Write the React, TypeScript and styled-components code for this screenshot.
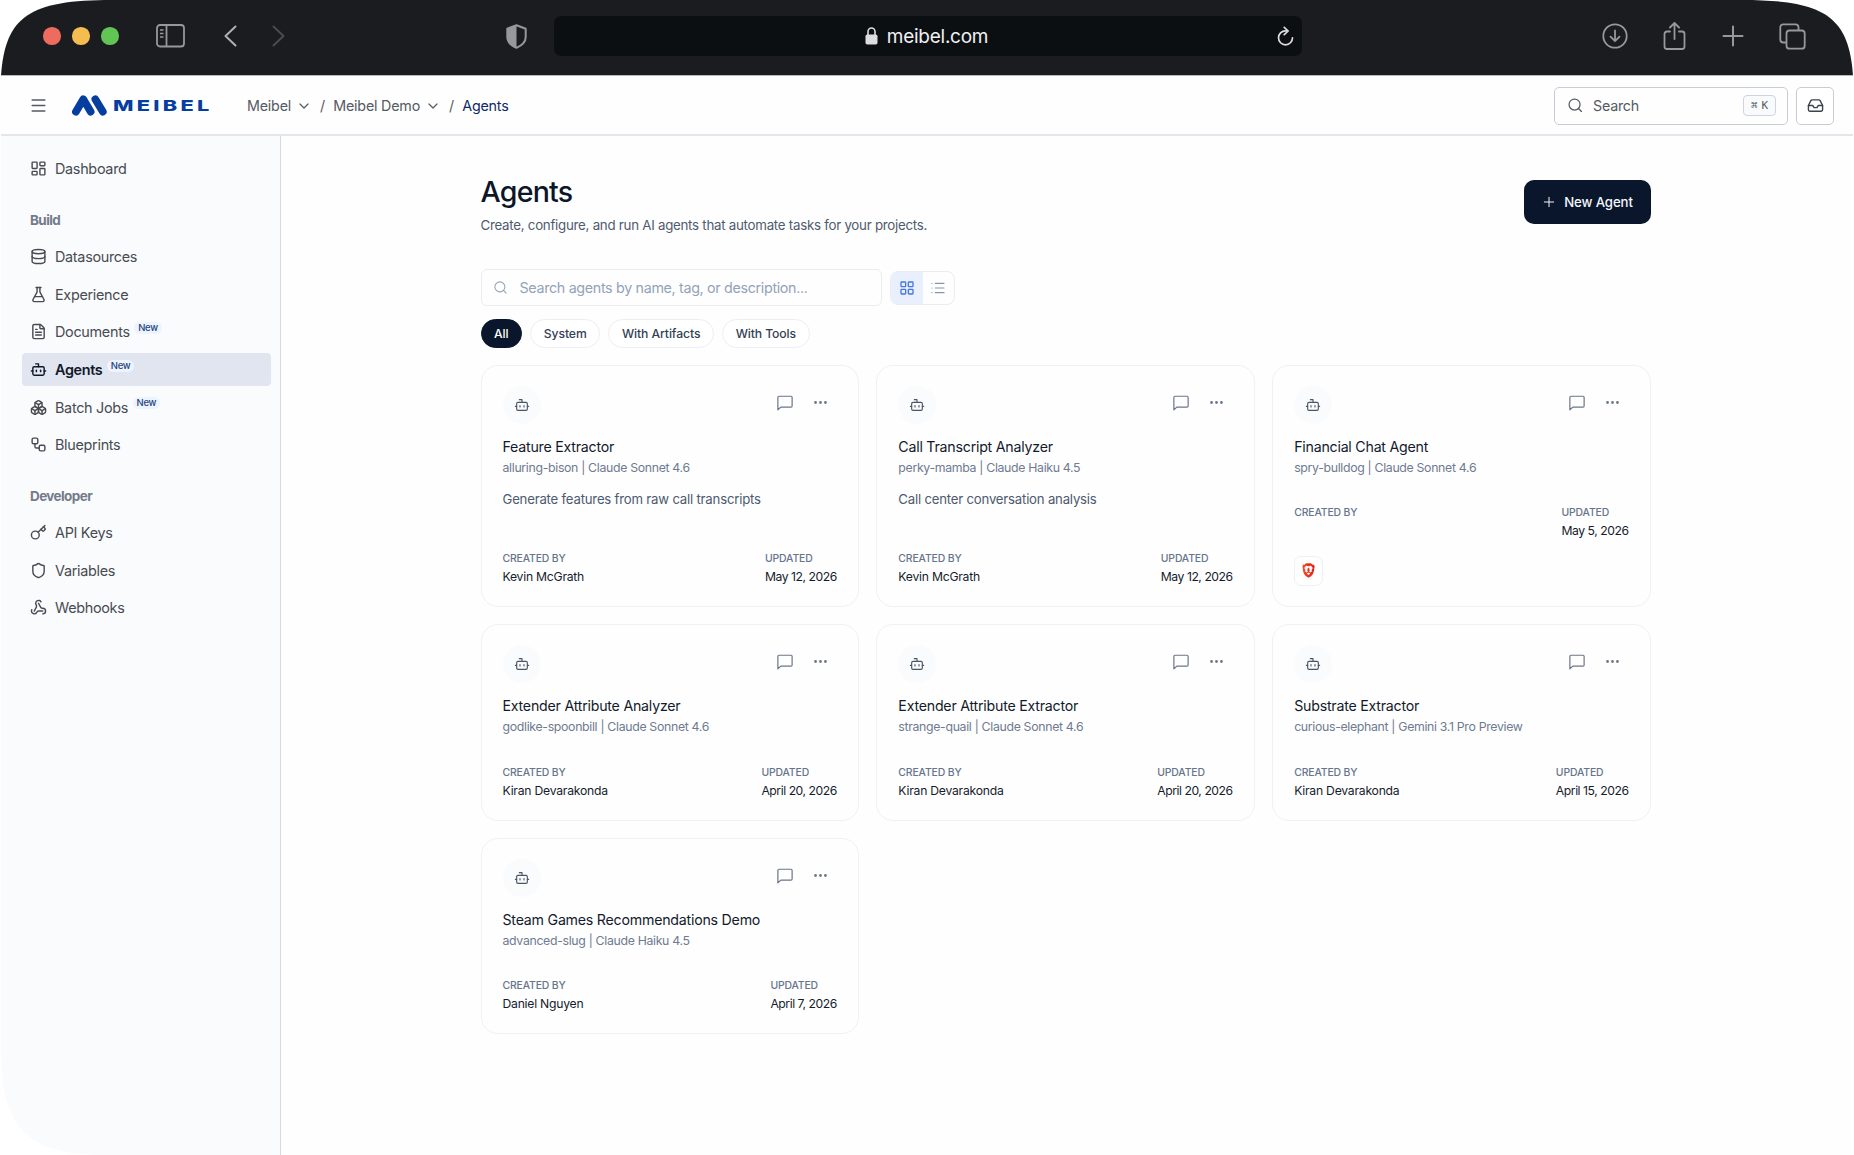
import type { ReactNode } from "react";
import styled, { createGlobalStyle } from "styled-components";
import {
  Bot,
  Boxes,
  ChevronDown,
  Database,
  Ellipsis,
  FileText,
  FlaskConical,
  Inbox,
  Key,
  LayoutDashboard,
  LayoutGrid,
  List,
  Menu,
  Plus,
  Search,
  Shield,
  Webhook,
  Workflow,
} from "lucide-react";

const GlobalStyle = createGlobalStyle`
  * {
    box-sizing: border-box;
  }

  body {
    margin: 0;
    background: #fff;
    font-family: Inter, "Liberation Sans", sans-serif;
    overflow: hidden;
  }

  svg {
    display: block;
    flex-shrink: 0;
  }
`;

const Window = styled.div`
  display: flex;
  flex-direction: column;
  width: 1854px;
  height: 1155px;
  background: #fefefe;
  clip-path: path(
    "M1 76 C5 16 30 0 112 0 L1742 0 C1824 0 1849 16 1853 76 L1853 1155 L100 1155 C25 1154 2 1125 1 1053 Z"
  );
`;

/* Browser chrome */

const Chrome = styled.div`
  display: flex;
  align-items: center;
  flex-shrink: 0;
  height: 76px;
  padding: 0 48px 3px 43px;
  background: #1b1c20;
  border-bottom: 1px solid #b9babd;
  color: #96989b;
`;

const Lights = styled.div`
  display: flex;
  gap: 11.5px;
  margin-right: 37px;
`;

const Light = styled.span<{ $color: string }>`
  width: 17.5px;
  height: 17.5px;
  border-radius: 50%;
  background: ${(props) => props.$color};
`;

const NavArrows = styled.div`
  display: flex;
  gap: 35px;
  margin-left: 39.5px;
`;

const ShieldSlot = styled.div`
  margin-left: 220.5px;
`;

const AddressBar = styled.div`
  display: grid;
  grid-template-columns: 1fr auto 1fr;
  align-items: center;
  width: 748px;
  height: 40px;
  margin-left: 27px;
  padding-right: 8px;
  border-radius: 7px;
  background: #0b0f12;
  color: #dcdddf;
`;

const Address = styled.div`
  grid-column: 2;
  display: flex;
  align-items: center;
  gap: 9px;
  padding-left: 6px;
  color: #f1f1f2;
  font-size: 19px;
  letter-spacing: -0.25px;
`;

const Reload = styled.div`
  justify-self: end;
`;

const ChromeActions = styled.div`
  display: flex;
  align-items: center;
  gap: 35.5px;
  margin-left: auto;
`;

/* App header */

const Header = styled.header`
  display: flex;
  align-items: center;
  flex-shrink: 0;
  height: 60px;
  margin-right: 1px;
  padding: 1px 19px 0 29px;
  border-bottom: 2px solid #e4e6eb;
  color: #555a63;
`;

const Logo = styled.div`
  display: flex;
  align-items: center;
  width: 143px;
  margin-left: 24px;
  color: #063e9f;
`;

const Wordmark = styled.span`
  margin-left: 6px;
  font-size: 15.2px;
  font-weight: 800;
  letter-spacing: 2.3px;
  line-height: 20px;
  transform: scaleX(1.43);
  transform-origin: left center;
`;

const Breadcrumbs = styled.nav`
  display: flex;
  align-items: center;
  margin-left: 32px;
  font-size: 14.3px;
`;

const Crumb = styled.span<{ $current?: boolean }>`
  color: ${(props) => (props.$current ? "#0f2a66" : "#555a63")};
  letter-spacing: -0.2px;
`;

const CrumbArrow = styled(ChevronDown)`
  margin: 0 8.5px 0 4.5px;
`;

const Slash = styled.span`
  margin-right: 8px;
`;

const HeaderTools = styled.div`
  display: flex;
  gap: 8px;
  margin-left: auto;
`;

const SearchBox = styled.div`
  display: flex;
  align-items: center;
  gap: 9.5px;
  width: 234px;
  height: 38px;
  padding: 0 11px 0 12px;
  border: 1px solid #c8ccd5;
  border-radius: 5px;
  font-size: 14.3px;
  letter-spacing: -0.25px;
`;

const Shortcut = styled.kbd`
  display: flex;
  align-items: center;
  justify-content: center;
  gap: 4px;
  width: 33px;
  height: 21px;
  margin-left: auto;
  border: 1px solid #cfd5e0;
  border-radius: 4px;
  background: #f8fafc;
  font-family: "DejaVu Sans Mono", monospace;
  font-size: 11px;
  letter-spacing: 0;
`;

const InboxButton = styled.button`
  display: flex;
  align-items: center;
  justify-content: center;
  width: 38px;
  height: 38px;
  padding: 0;
  border: 1px solid #c8ccd5;
  border-radius: 5px;
  background: #fff;
  color: #3d424c;
`;

/* Sidebar */

const Body = styled.div`
  display: flex;
  flex: 1;
  min-height: 0;
`;

const Sidebar = styled.aside`
  flex-shrink: 0;
  width: 281px;
  padding: 16px 9px 0 22px;
  border-right: 1px solid #d9dae1;
  background: #fafbfd;
`;

const NavGroup = styled.div`
  display: flex;
  flex-direction: column;
  gap: 4.2px;
`;

const GroupTitle = styled.h2`
  margin: 21.5px 0 6.7px;
  padding-left: 8px;
  color: #747b8a;
  font-size: 13.5px;
  font-weight: 700;
  letter-spacing: -0.6px;
  line-height: 26px;
`;

const NavItem = styled.a<{ $active?: boolean }>`
  display: flex;
  align-items: center;
  height: 33.5px;
  padding-left: 8px;
  border-radius: 4px;
  background: ${(props) => (props.$active ? "#e1e5f0" : "transparent")};
  color: ${(props) => (props.$active ? "#101828" : "#484b52")};
  font-size: 14.4px;
  font-weight: ${(props) => (props.$active ? 600 : 400)};
  letter-spacing: ${(props) => (props.$active ? "-0.35px" : "-0.3px")};

  svg {
    margin-right: 8px;
  }
`;

const NewBadge = styled.span`
  margin: 0 0 8px 4.5px;
  padding: 0 4px;
  border-radius: 6px;
  background: #ecf4ff;
  color: #28427c;
  font-size: 9.5px;
  font-weight: 500;
  letter-spacing: -0.3px;
  line-height: 12px;
`;

/* Main column */

const Main = styled.main`
  display: flex;
  flex-direction: column;
  width: 1170px;
  margin-left: 199.5px;
  padding-top: 39px;
`;

const PageHeader = styled.div`
  display: flex;
  align-items: flex-start;
  justify-content: space-between;
  height: 94px;
`;

const Title = styled.h1`
  margin: 0;
  color: #0c1629;
  font-size: 28.5px;
  font-weight: 500;
  letter-spacing: -0.75px;
  line-height: 34px;
`;

const Subtitle = styled.p`
  margin: 6px 0 0;
  color: #4f5b6e;
  font-size: 13.3px;
  letter-spacing: -0.26px;
  line-height: 20px;
`;

const NewAgentButton = styled.button`
  display: flex;
  align-items: center;
  justify-content: center;
  gap: 7px;
  width: 127px;
  height: 44px;
  margin-top: 5px;
  padding: 0;
  border: 0;
  border-radius: 10px;
  background: #0a162b;
  color: #f4f7fb;
  font-family: inherit;
  font-size: 13.2px;
  font-weight: 500;
  letter-spacing: -0.1px;
`;

const Toolbar = styled.div`
  display: flex;
  align-items: center;
  gap: 8.5px;
`;

const AgentSearch = styled.div`
  display: flex;
  align-items: center;
  gap: 12px;
  width: 401px;
  height: 37px;
  padding-left: 11px;
  border: 1px solid #e9ecf1;
  border-radius: 6px;
  color: #94a3b8;
  font-size: 14.3px;
  letter-spacing: -0.33px;
`;

const ViewToggle = styled.div`
  display: flex;
  width: 65px;
  height: 34px;
  border: 1px solid #e9ecf1;
  border-radius: 8px;
  overflow: hidden;
`;

const ViewOption = styled.div<{ $active?: boolean }>`
  display: flex;
  flex: 1;
  align-items: center;
  justify-content: center;
  background: ${(props) => (props.$active ? "#e9effc" : "transparent")};
  color: ${(props) => (props.$active ? "#4277e6" : "#8793a7")};
`;

const Filters = styled.div`
  display: flex;
  gap: 8.3px;
  margin: 12.5px 0 17px;
`;

const Pill = styled.button<{ $active?: boolean }>`
  height: 29.5px;
  padding: 0 12.5px;
  border: 1px solid ${(props) => (props.$active ? "#0a162b" : "#eceef2")};
  border-radius: 15px;
  background: ${(props) => (props.$active ? "#0a162b" : "#fff")};
  color: ${(props) => (props.$active ? "#fff" : "#334155")};
  font-family: inherit;
  font-size: 12.2px;
  font-weight: 500;
  letter-spacing: -0.1px;
`;

const CardGrid = styled.div`
  display: grid;
  grid-template-columns: repeat(3, 1fr);
  gap: 17.2px 17.5px;
`;

const Card = styled.article`
  display: flex;
  flex-direction: column;
  min-height: 195.5px;
  padding: 20px 21px 20px;
  border: 1px solid #eff1f4;
  border-radius: 17px;
`;

const CardTop = styled.div`
  display: flex;
  justify-content: space-between;
  height: 50px;
  color: #6b7689;
`;

const Avatar = styled.div`
  display: flex;
  align-items: center;
  justify-content: center;
  width: 38px;
  height: 38px;
  border-radius: 50%;
  background: #f9fbfd;
  color: #4b5567;
`;

const CardActions = styled.div`
  display: flex;
  gap: 18px;
  padding: 8px 8px 0 0;
`;

const AgentName = styled.h3`
  margin: 0;
  color: #121a2b;
  font-size: 14.2px;
  font-weight: 400;
  letter-spacing: -0.23px;
  line-height: 21px;
`;

const AgentMeta = styled.p`
  margin: 1.7px 0 0;
  color: #6e7b91;
  font-size: 12.3px;
  letter-spacing: -0.32px;
  line-height: 18px;
`;

const Description = styled.p`
  margin: 12px 0 0;
  color: #4d5a6f;
  font-size: 13.2px;
  letter-spacing: -0.21px;
  line-height: 20px;
`;

const CardFooter = styled.div<{ $pinned: boolean }>`
  display: flex;
  justify-content: space-between;
  margin-top: ${(props) => (props.$pinned ? "auto" : "28.8px")};
`;

const FieldLabel = styled.div`
  color: #66758c;
  font-size: 10.4px;
  font-weight: 500;
  letter-spacing: -0.13px;
  line-height: 15px;
`;

const FieldValue = styled.div`
  height: 18px;
  margin-top: 2px;
  color: #141c2c;
  font-size: 12.2px;
  letter-spacing: -0.24px;
  line-height: 18px;
`;

const DateValue = styled(FieldValue)`
  letter-spacing: -0.46px;
`;

const ToolBadge = styled.div`
  display: flex;
  align-items: center;
  justify-content: center;
  width: 29px;
  height: 30px;
  margin-top: 15.5px;
  border: 1px solid #eef0f3;
  border-radius: 7px;
`;

interface NavEntry {
  label: string;
  icon: ReactNode;
  isNew?: boolean;
  active?: boolean;
}

const buildItems: NavEntry[] = [
  { label: "Datasources", icon: <Database size={17} /> },
  { label: "Experience", icon: <FlaskConical size={17} /> },
  { label: "Documents", icon: <FileText size={17} />, isNew: true },
  { label: "Agents", icon: <Bot size={17} />, isNew: true, active: true },
  { label: "Batch Jobs", icon: <Boxes size={17} />, isNew: true },
  { label: "Blueprints", icon: <Workflow size={17} /> },
];

const developerItems: NavEntry[] = [
  { label: "API Keys", icon: <Key size={17} /> },
  { label: "Variables", icon: <Shield size={17} /> },
  { label: "Webhooks", icon: <Webhook size={17} /> },
];

interface Agent {
  name: string;
  slug: string;
  model: string;
  description?: string;
  createdBy?: string;
  updated: string;
  usesBrave?: boolean;
}

const agents: Agent[] = [
  {
    name: "Feature Extractor",
    slug: "alluring-bison",
    model: "Claude Sonnet 4.6",
    description: "Generate features from raw call transcripts",
    createdBy: "Kevin McGrath",
    updated: "May 12, 2026",
  },
  {
    name: "Call Transcript Analyzer",
    slug: "perky-mamba",
    model: "Claude Haiku 4.5",
    description: "Call center conversation analysis",
    createdBy: "Kevin McGrath",
    updated: "May 12, 2026",
  },
  {
    name: "Financial Chat Agent",
    slug: "spry-bulldog",
    model: "Claude Sonnet 4.6",
    updated: "May 5, 2026",
    usesBrave: true,
  },
  {
    name: "Extender Attribute Analyzer",
    slug: "godlike-spoonbill",
    model: "Claude Sonnet 4.6",
    createdBy: "Kiran Devarakonda",
    updated: "April 20, 2026",
  },
  {
    name: "Extender Attribute Extractor",
    slug: "strange-quail",
    model: "Claude Sonnet 4.6",
    createdBy: "Kiran Devarakonda",
    updated: "April 20, 2026",
  },
  {
    name: "Substrate Extractor",
    slug: "curious-elephant",
    model: "Gemini 3.1 Pro Preview",
    createdBy: "Kiran Devarakonda",
    updated: "April 15, 2026",
  },
  {
    name: "Steam Games Recommendations Demo",
    slug: "advanced-slug",
    model: "Claude Haiku 4.5",
    createdBy: "Daniel Nguyen",
    updated: "April 7, 2026",
  },
];

const filters = ["All", "System", "With Artifacts", "With Tools"];

const SidebarLinks = ({ items }: { items: NavEntry[] }) => (
  <NavGroup>
    {items.map((item) => (
      <NavItem key={item.label} $active={item.active}>
        {item.icon}
        {item.label}
        {item.isNew && <NewBadge>New</NewBadge>}
      </NavItem>
    ))}
  </NavGroup>
);

const BraveIcon = () => (
  <svg width="13" height="15" viewBox="0 0 26 30" fill="none">
    <defs>
      <linearGradient id="brave" x1="0" y1="0" x2="26" y2="0" gradientUnits="userSpaceOnUse">
        <stop stopColor="#f4561f" />
        <stop offset="0.5" stopColor="#ee2f1c" />
        <stop offset="1" stopColor="#e0201f" />
      </linearGradient>
    </defs>
    <path d="M8 0.5h10l3 3 2.500-.3 2 4.300-1 2.500c0 6-2 12-4.500 14.500-2 2-5 4-7 5-2-1-5-3-7-5C3.500 22 1.500 16 1.500 10l-1-2.500 2-4.300 2.500.3z" fill="url(#brave)" />
    <path d="M8 5.500l5 1 5-1 3.500 4.500-2.500 4 1 2.500-3.500 2.500-2-2 1-2.500-1-4-1.500-1.500-1.500 1.500-1 4 1 2.500-2 2L6 16.500 7 14 4.500 10z" fill="#fff" />
    <path d="M13 19l3.500 2-3.500 3-3.500-3z" fill="#fff" />
  </svg>
);

const BrowserChrome = () => (
  <Chrome>
    <Lights>
      <Light $color="#ee6b60" />
      <Light $color="#f5bd4f" />
      <Light $color="#61c454" />
    </Lights>
    <svg width="29" height="24" viewBox="0 0 29 24" fill="none" stroke="currentColor" strokeWidth="1.8">
      <rect x="1" y="1" width="27" height="21.5" rx="3" />
      <path d="M10.5 1v21.5" />
      <path d="M4 6h3.500M4 9.500h3.500M4 13h3.500" strokeWidth="1.4" />
    </svg>
    <NavArrows>
      <svg width="13" height="22" viewBox="0 0 13 22" fill="none" stroke="#aeb0b2" strokeWidth="2" strokeLinecap="round" strokeLinejoin="round">
        <path d="M11.500 1.500L1.500 11l10 9.500" />
      </svg>
      <svg width="13" height="22" viewBox="0 0 13 22" fill="none" stroke="#4a4b4f" strokeWidth="2" strokeLinecap="round" strokeLinejoin="round">
        <path d="M1.500 1.500l10 9.500-10 9.500" />
      </svg>
    </NavArrows>
    <ShieldSlot>
      <svg width="21" height="25" viewBox="0 0 21 25" fill="none">
        <path d="M10.500 1.200L19.700 4.700V13c0 5-4.200 8.600-9.200 10.800C5.500 21.600 1.300 18 1.300 13V4.700z" stroke="currentColor" strokeWidth="2" strokeLinejoin="round" />
        <path d="M10.500 1.200V23.800C5.500 21.600 1.300 18 1.300 13V4.700z" fill="currentColor" />
      </svg>
    </ShieldSlot>
    <AddressBar>
      <Address>
        <svg width="13" height="18" viewBox="0 0 13 18" fill="none">
          <rect x="0.500" y="7.500" width="12" height="10" rx="1.800" fill="#dcdddf" />
          <path d="M3 8V4.500a3.500 3.500 0 0 1 7 0V8" stroke="#dcdddf" strokeWidth="1.600" />
        </svg>
        meibel.com
      </Address>
      <Reload>
        <svg width="17" height="20" viewBox="0 0 17 20" fill="none" stroke="currentColor" strokeWidth="1.700" strokeLinecap="round" strokeLinejoin="round">
          <path d="M9.500 4.800H8.500a7 7 0 1 0 7 7" />
          <path d="M7.200 1.300l4 3.700-4 3.700" />
        </svg>
      </Reload>
    </AddressBar>
    <ChromeActions>
      <svg width="26" height="26" viewBox="0 0 26 26" fill="none" stroke="currentColor" strokeWidth="1.800" strokeLinecap="round" strokeLinejoin="round">
        <circle cx="13" cy="13" r="11.700" />
        <path d="M13 7.500v10.500M8.500 13.700l4.500 4.500 4.500-4.500" />
      </svg>
      <svg width="23" height="28" viewBox="0 0 23 28" fill="none" stroke="currentColor" strokeWidth="1.800" strokeLinecap="round" strokeLinejoin="round">
        <path d="M7 9.500H4a2.500 2.500 0 0 0-2.500 2.500v12.500A2.500 2.500 0 0 0 4 27h15a2.500 2.500 0 0 0 2.500-2.500V12A2.500 2.500 0 0 0 19 9.500h-3" />
        <path d="M11.500 17V1.500M7 5.500l4.500-4.500L16 5.500" />
      </svg>
      <svg width="22" height="22" viewBox="0 0 22 22" fill="none" stroke="currentColor" strokeWidth="2" strokeLinecap="round">
        <path d="M11 1.500v19M1.500 11h19" />
      </svg>
      <svg width="27" height="27" viewBox="0 0 27 27" fill="none" stroke="currentColor" strokeWidth="1.800">
        <rect x="7.500" y="7.500" width="18.200" height="18.200" rx="3" />
        <path d="M7.500 19.500H4.300a3 3 0 0 1-3-3V4.300a3 3 0 0 1 3-3h12.200a3 3 0 0 1 3 3v3" />
      </svg>
    </ChromeActions>
  </Chrome>
);

const AppHeader = () => (
  <Header>
    <Menu size={19} strokeWidth={1.8} />
    <Logo>
      <svg width="35" height="21" viewBox="0 0 35 21" fill="none" stroke="currentColor" strokeWidth="7.600" strokeLinecap="round" strokeLinejoin="round">
        <path d="M3.900 16.700L11.300 4.200L18.700 16.700" />
        <path d="M23.300 4.200L30.900 16.700" />
      </svg>
      <Wordmark>MEIBEL</Wordmark>
    </Logo>
    <Breadcrumbs>
      <Crumb>Meibel</Crumb>
      <CrumbArrow size={16} strokeWidth={1.8} />
      <Slash>/</Slash>
      <Crumb>Meibel Demo</Crumb>
      <CrumbArrow size={16} strokeWidth={1.8} />
      <Slash>/</Slash>
      <Crumb $current>Agents</Crumb>
    </Breadcrumbs>
    <HeaderTools>
      <SearchBox>
        <Search size={16.5} strokeWidth={1.8} />
        Search
        <Shortcut>
          <span>⌘</span>
          <span>K</span>
        </Shortcut>
      </SearchBox>
      <InboxButton>
        <Inbox size={17} />
      </InboxButton>
    </HeaderTools>
  </Header>
);

const AgentCard = ({ agent }: { agent: Agent }) => (
  <Card>
    <CardTop>
      <Avatar>
        <Bot size={16} strokeWidth={1.7} />
      </Avatar>
      <CardActions>
        <svg width="18" height="18" viewBox="0 0 24 24" fill="none" stroke="currentColor" strokeWidth="1.600" strokeLinecap="round" strokeLinejoin="round">
          <path d="M21.500 16a1.500 1.500 0 0 1-1.500 1.500H6.500L2.500 21V4.500A1.500 1.500 0 0 1 4 3h16a1.500 1.500 0 0 1 1.500 1.500z" />
        </svg>
        <Ellipsis size={17} />
      </CardActions>
    </CardTop>
    <AgentName>{agent.name}</AgentName>
    <AgentMeta>
      {agent.slug} | {agent.model}
    </AgentMeta>
    {agent.description && <Description>{agent.description}</Description>}
    <CardFooter $pinned={Boolean(agent.description)}>
      <div>
        <FieldLabel>CREATED BY</FieldLabel>
        <FieldValue>{agent.createdBy}</FieldValue>
      </div>
      <div>
        <FieldLabel>UPDATED</FieldLabel>
        <DateValue>{agent.updated}</DateValue>
      </div>
    </CardFooter>
    {agent.usesBrave && (
      <ToolBadge>
        <BraveIcon />
      </ToolBadge>
    )}
  </Card>
);

const App = () => {
  return (
    <>
      <GlobalStyle />
      <Window>
        <BrowserChrome />
        <AppHeader />
        <Body>
          <Sidebar>
            <SidebarLinks
              items={[{ label: "Dashboard", icon: <LayoutDashboard size={17} /> }]}
            />
            <GroupTitle>Build</GroupTitle>
            <SidebarLinks items={buildItems} />
            <GroupTitle>Developer</GroupTitle>
            <SidebarLinks items={developerItems} />
          </Sidebar>
          <Main>
            <PageHeader>
              <div>
                <Title>Agents</Title>
                <Subtitle>
                  Create, configure, and run AI agents that automate tasks for
                  your projects.
                </Subtitle>
              </div>
              <NewAgentButton>
                <Plus size={16} strokeWidth={1.5} />
                New Agent
              </NewAgentButton>
            </PageHeader>
            <Toolbar>
              <AgentSearch>
                <Search size={15} strokeWidth={1.7} />
                Search agents by name, tag, or description...
              </AgentSearch>
              <ViewToggle>
                <ViewOption $active>
                  <LayoutGrid size={16} />
                </ViewOption>
                <ViewOption>
                  <List size={16} strokeWidth={1.7} />
                </ViewOption>
              </ViewToggle>
            </Toolbar>
            <Filters>
              {filters.map((filter) => (
                <Pill key={filter} $active={filter === "All"}>
                  {filter}
                </Pill>
              ))}
            </Filters>
            <CardGrid>
              {agents.map((agent) => (
                <AgentCard key={agent.name} agent={agent} />
              ))}
            </CardGrid>
          </Main>
        </Body>
      </Window>
    </>
  );
};

export default App;
